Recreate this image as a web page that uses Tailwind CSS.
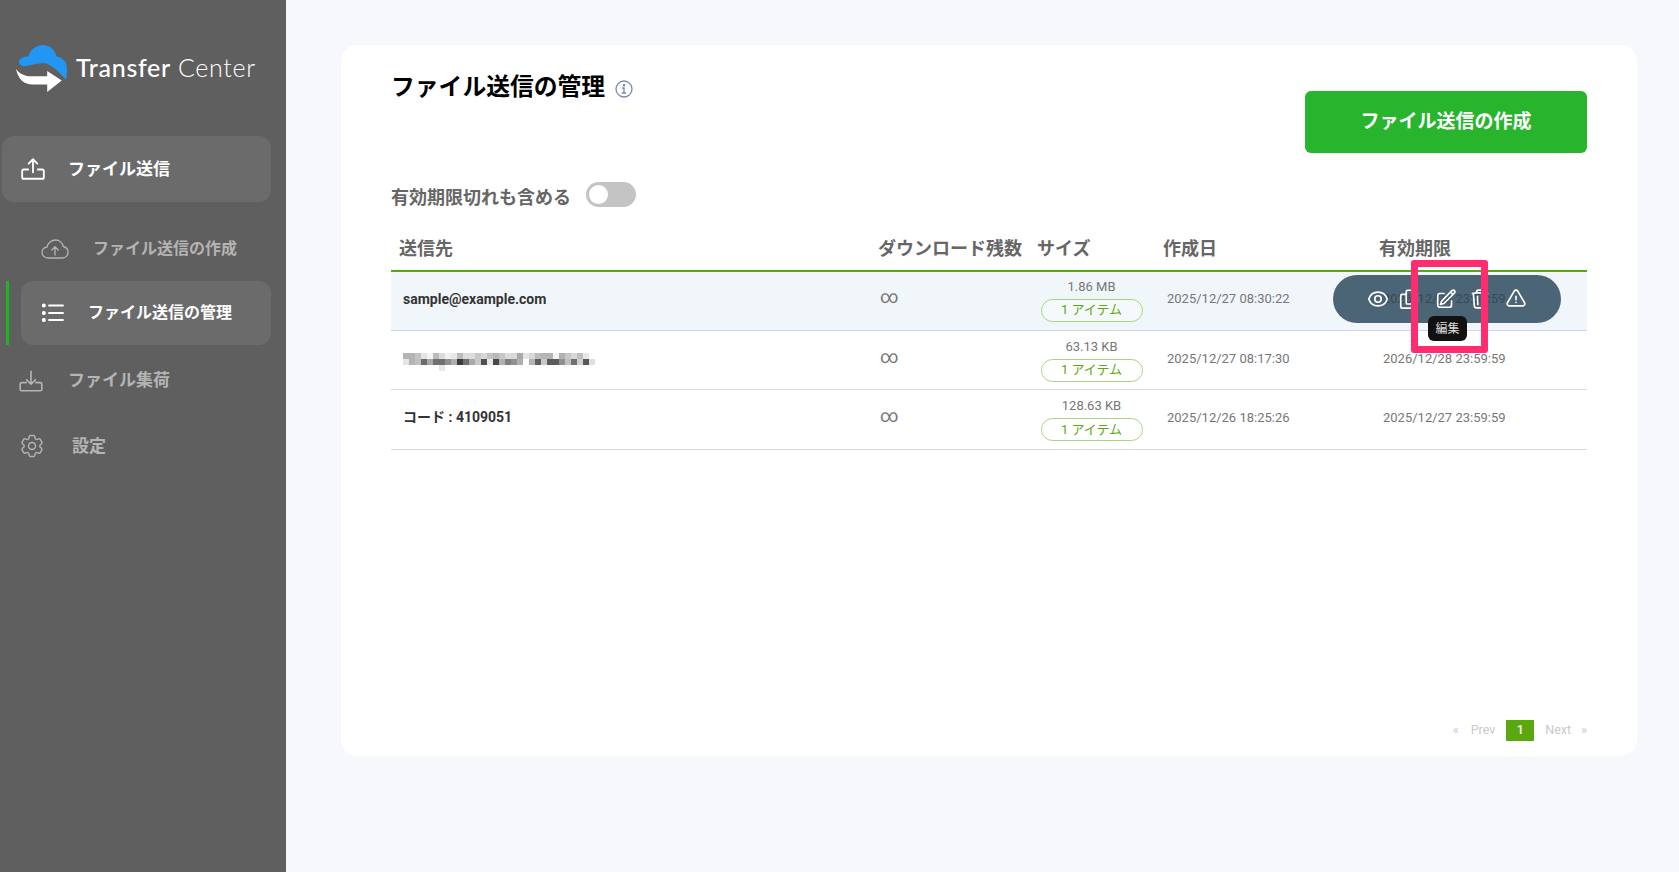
<!DOCTYPE html>
<html lang="ja">
<head>
    <meta charset="UTF-8">
    <title>Transfer Center</title>
    <script src="https://cdn.jsdelivr.net/npm/@tailwindcss/browser@4"></script>
</head>
<body class="relative h-[872px] w-[1679px] overflow-hidden bg-[#f7f8fc] font-['Roboto','Noto_Sans_CJK_JP',sans-serif]">
    <div class="flex h-full">
        <!-- Sidebar -->
        <aside class="w-[286px] shrink-0 bg-[#5f5f5f]">
            <div class="flex h-[136px] items-start pl-4 pt-[45px]">
                <svg class="h-[48px] w-[52px] shrink-0" viewBox="0 0 50 46">
                    <path fill="#2196f3" d="M6 20C2 19 2 14 5 13C8 11 10 11 12 11C14 4 20 0 26 0C32 0 37 4 39 11C45 12 49 16 49 22C49 26 49 30 48 33L38 23L30 18C20 16 10 22 6 20Z"/>
                    <path fill="#fff" d="M0 23C2 33 8 38 16 38L30 38L30 45L44 34L30 25L30 30L14 30C8 30 3 27 0 23Z"/>
                </svg>
                <div class="ml-[8px] mt-[5px] font-['Lato',sans-serif] text-[25px] leading-[34px] tracking-[0.700px] text-white whitespace-nowrap"><span class="font-medium">Transfer</span> <span class="font-light">Center</span></div>
            </div>
            <nav>
                <a class="ml-[2px] flex h-[66px] w-[269px] items-center rounded-xl bg-[#6b6b6b] pl-[18px] text-[17px] font-bold text-white">
                    <svg class="h-[26px] w-[26px]" fill="none" stroke="currentColor" stroke-width="1.700" stroke-linecap="round" stroke-linejoin="round" viewBox="0 0 24 24"><path d="M12 15V3M8 7l4-4 4 4M7.500 12.500H3.500A1.500 1.500 0 002 14v5.500A1.500 1.500 0 003.500 21h17a1.500 1.500 0 001.500-1.500V14a1.500 1.500 0 00-1.500-1.500h-4"/></svg>
                    <span class="ml-[22px] pt-[2px]">ファイル送信</span>
                </a>
                <a class="mt-[15px] flex h-[64px] items-center pl-[41px] text-[16px] font-bold text-[#b4b4b4]">
                    <svg class="h-[28px] w-[28px]" fill="none" stroke="currentColor" stroke-width="1.300" stroke-linecap="round" stroke-linejoin="round" viewBox="0 0 28 28"><path d="M7 23C3.500 23 1 20.500 1 17.500C1 14.500 3.300 12.300 6 12C7 8 10.500 5 14.500 5C18.500 5 21.500 8 22.300 11.500C25 12 27 14.500 27 17.500C27 20.500 24.500 23 21.500 23Z"/><path d="M14 20V12M10.800 15L14 11.800L17.200 15"/></svg>
                    <span class="ml-[24px]">ファイル送信の作成</span>
                </a>
                <div class="flex h-[64px] items-stretch">
                    <div class="ml-[6px] w-[3px] bg-[#1fb51f]"></div>
                    <a class="ml-[12px] flex w-[250px] items-center rounded-xl bg-[#6b6b6b] pl-[21px] text-[16px] font-bold text-white">
                        <svg class="h-[22px] w-[22px]" fill="none" stroke="currentColor" stroke-width="1.800" stroke-linecap="round" viewBox="0 0 22 22"><path d="M7 3.500H21M7 11H21M7 18H21"/><path stroke-width="4" d="M1.800 3.500h.1M1.800 11h.1M1.800 18h.1"/></svg>
                        <span class="ml-[24px]">ファイル送信の管理</span>
                    </a>
                </div>
                <a class="mt-[4px] flex h-[64px] items-center pl-[18px] text-[17px] font-bold text-[#b4b4b4]">
                    <svg class="h-[26px] w-[26px]" fill="none" stroke="currentColor" stroke-width="1.500" stroke-linecap="round" stroke-linejoin="round" viewBox="0 0 24 24"><path d="M12 3V15M8 11l4 4 4-4M7.500 13.500H3.500A1.500 1.500 0 002 15v4.500A1.500 1.500 0 003.500 21h17a1.500 1.500 0 001.500-1.500V15a1.500 1.500 0 00-1.500-1.500h-4"/></svg>
                    <span class="ml-[24px]">ファイル集荷</span>
                </a>
                <a class="flex h-[66px] items-center pl-[18px] text-[17px] font-bold text-[#b4b4b4]">
                    <svg class="h-[28px] w-[28px]" fill="none" stroke="currentColor" stroke-width="1.200" viewBox="0 0 24 24"><path stroke-linecap="round" stroke-linejoin="round" d="M9.594 3.940c.09-.542.56-.94 1.110-.94h2.593c.55 0 1.020.398 1.110.94l.213 1.281c.063.374.313.686.645.87.074.04.147.083.22.127.324.196.72.257 1.075.124l1.217-.456a1.125 1.125 0 011.370.49l1.296 2.247a1.125 1.125 0 01-.26 1.431l-1.003.827c-.293.24-.438.613-.431.992a6.759 6.759 0 010 .255c-.007.378.138.75.43.99l1.005.828c.424.35.534.954.26 1.430l-1.298 2.247a1.125 1.125 0 01-1.369.491l-1.217-.456c-.355-.133-.75-.072-1.076.124a6.570 6.570 0 01-.22.128c-.331.183-.581.495-.644.869l-.213 1.280c-.09.543-.56.941-1.110.941h-2.594c-.55 0-1.020-.398-1.110-.94l-.213-1.281c-.062-.374-.312-.686-.644-.87a6.520 6.520 0 01-.22-.127c-.325-.196-.72-.257-1.076-.124l-1.217.456a1.125 1.125 0 01-1.369-.49l-1.297-2.247a1.125 1.125 0 01.26-1.431l1.004-.827c.292-.24.437-.613.43-.992a6.932 6.932 0 010-.255c.007-.378-.138-.75-.43-.99l-1.004-.828a1.125 1.125 0 01-.26-1.430l1.297-2.247a1.125 1.125 0 011.370-.491l1.216.456c.356.133.751.072 1.076-.124.072-.044.146-.087.22-.128.332-.183.582-.495.644-.869l.214-1.281z"/><circle cx="12" cy="12" r="3"/></svg>
                    <span class="ml-[26px] pt-[2px]">設定</span>
                </a>
            </nav>
        </aside>

        <!-- Main -->
        <main class="flex-1 pl-[55px] pr-[42px] pt-[45px]">
            <div class="flex h-[711px] flex-col rounded-2xl bg-white px-[50px] pt-[25px] pb-[15px]">
                <div class="flex items-start justify-between">
                    <div class="flex items-center pt-[1px]">
                        <h1 class="text-[23.800px] leading-[32px] font-bold text-black">ファイル送信の管理</h1>
                        <svg class="ml-[10px] mt-[3px] h-[18px] w-[18px] text-[#7a86b0]" fill="none" stroke="currentColor" stroke-width="1.300" viewBox="0 0 18 18"><circle cx="9" cy="9" r="8"/><path stroke-linecap="round" d="M7.500 8H9V13M7.300 13H10.700"/><circle cx="9" cy="5.300" r="0.600" fill="currentColor"/></svg>
                    </div>
                    <button class="mt-[21px] h-[62px] w-[282px] rounded-md bg-[#28b42d] text-[19px] font-bold text-white">ファイル送信の作成</button>
                </div>

                <div class="mt-[28px] flex h-[26px] items-center">
                    <span class="pt-[6px] text-[18px] font-bold text-[#666]">有効期限切れも含める</span>
                    <div class="ml-[15px] flex h-[25px] w-[50px] items-center rounded-full bg-[#c4c4c4] pl-[3px]">
                        <div class="h-[19px] w-[19px] rounded-full bg-white"></div>
                    </div>
                </div>

                <!-- Table -->
                <div class="mt-[21px]">
                    <div class="grid h-[44px] grid-cols-[479px_160px_125px_212px_220px] items-center border-b-2 border-[#5aa80f] pb-[1px] text-[18px] font-bold text-[#666]">
                        <div class="pl-2">送信先</div>
                        <div class="pl-2 whitespace-nowrap">ダウンロード残数</div>
                        <div class="pl-[7px]">サイズ</div>
                        <div class="pl-2">作成日</div>
                        <div class="pl-3">有効期限</div>
                    </div>

                    <div class="relative grid h-[59px] grid-cols-[479px_160px_125px_212px_220px] items-center border-b border-[#ccd6e6] bg-[#f1f6fa] text-[13px] text-[#777]">
                        <div class="absolute left-[942px] top-[3px] h-[48px] w-[228px] rounded-full bg-[#4c6576]"></div>
                        <div class="pb-[3px] pl-3 text-[14px] font-bold text-[#333]">sample@example.com</div>
                        <div class="pb-[9px] pl-[10px] text-[18px] leading-none">∞</div>
                        <div class="flex flex-col items-center pb-[3px] pr-[2px]"><span class="leading-[18px]">1.86 MB</span><span class="mt-[3px] flex h-[23px] w-[102px] items-center justify-center rounded-full border border-[#a5d585] bg-white/40 text-[#5aa80f]">1 アイテム</span></div>
                        <div class="pb-[4px] pl-3">2025/12/27 08:30:22</div>
                        <div class="relative z-10 pb-[4px] pl-4 text-[#364a58]">2026/12/28 23:59:59</div>
                        <div class="absolute left-[942px] top-[3px] z-20 flex h-[48px] w-[228px] items-center pl-[34px] text-white">
                            <svg class="h-[22px] w-[22px] shrink-0" fill="none" stroke="currentColor" stroke-width="1.800" stroke-linecap="round" stroke-linejoin="round" viewBox="0 0 24 24"><path d="M2.036 12.322a1.012 1.012 0 010-.639C3.423 7.510 7.360 4.500 12 4.500c4.638 0 8.573 3.007 9.963 7.178.07.207.07.431 0 .639C20.577 16.490 16.640 19.500 12 19.500c-4.638 0-8.573-3.007-9.963-7.178z"/><circle cx="12" cy="12" r="3.500"/></svg>
                            <svg class="ml-[9px] h-[22px] w-[22px] shrink-0" fill="none" stroke="currentColor" stroke-width="1.800" stroke-linecap="round" stroke-linejoin="round" viewBox="0 0 24 24"><rect x="9" y="2.500" width="12" height="15" rx="1.500"/><path d="M9 7H4.500A1.500 1.500 0 003 8.500v12A1.500 1.500 0 004.500 22h9a1.500 1.500 0 001.500-1.500V17.500"/></svg>
                            <svg class="ml-[15px] h-[22px] w-[22px] shrink-0" fill="none" stroke="currentColor" stroke-width="1.800" stroke-linecap="round" stroke-linejoin="round" viewBox="0 0 24 24"><path d="M16.862 4.487l1.687-1.688a1.875 1.875 0 112.652 2.652L10.582 16.070a4.500 4.500 0 01-1.897 1.130L6 18l.8-2.685a4.500 4.500 0 011.130-1.897l8.932-8.931zm0 0L19.500 7.125M18 14v4.750A2.250 2.250 0 0115.750 21H5.250A2.250 2.250 0 013 18.750V8.250A2.250 2.250 0 015.250 6H10"/></svg>
                            <svg class="ml-[12px] h-[22px] w-[22px] shrink-0" fill="none" stroke="currentColor" stroke-width="1.800" stroke-linecap="round" stroke-linejoin="round" viewBox="0 0 24 24"><path d="M14.740 9l-.346 9m-4.788 0L9.260 9m9.968-3.210c.342.052.682.107 1.022.166m-1.022-.165L18.160 19.673a2.250 2.250 0 01-2.244 2.077H8.084a2.250 2.250 0 01-2.244-2.077L4.772 5.790m14.456 0a48.108 48.108 0 00-3.478-.397m-12 .562c.34-.059.68-.114 1.022-.165m0 0a48.110 48.110 0 013.478-.397m7.500 0v-.916c0-1.180-.91-2.164-2.090-2.201a51.964 51.964 0 00-3.320 0c-1.180.037-2.090 1.022-2.090 2.201v.916m7.500 0a48.667 48.667 0 00-7.500 0"/></svg>
                            <svg class="ml-[14px] h-[22px] w-[22px] shrink-0" fill="none" stroke="currentColor" stroke-width="1.800" stroke-linecap="round" stroke-linejoin="round" viewBox="0 0 24 24"><path d="M12 9v3.750m-9.303 3.376c-.866 1.500.217 3.374 1.948 3.374h14.710c1.730 0 2.813-1.874 1.948-3.374L13.949 3.378c-.866-1.500-3.032-1.500-3.898 0L2.697 16.126zM12 15.750h.007v.008H12v-.008z"/></svg>
                        </div>
                    </div>

                    <div class="grid h-[59px] grid-cols-[479px_160px_125px_212px_220px] items-center border-b border-[#d5dce6] text-[13px] text-[#777]">
                        <div id="blurredAddress" class="ml-3 flex w-[192px] flex-wrap pt-[3px]"></div>
                        <div class="pb-[7px] pl-[10px] text-[18px] leading-none">∞</div>
                        <div class="flex flex-col items-center pb-[1px] pr-[2px]"><span class="leading-[18px]">63.13 KB</span><span class="mt-[3px] flex h-[23px] w-[102px] items-center justify-center rounded-full border border-[#a5d585] text-[#5aa80f]">1 アイテム</span></div>
                        <div class="pb-[2px] pl-3">2025/12/27 08:17:30</div>
                        <div class="pb-[2px] pl-4">2026/12/28 23:59:59</div>
                    </div>

                    <div class="grid h-[60px] grid-cols-[479px_160px_125px_212px_220px] items-center border-b border-[#d5dce6] text-[13px] text-[#777]">
                        <div class="pb-[5px] pl-3 text-[14px] font-bold text-[#333]">コード : 4109051</div>
                        <div class="pb-[7px] pl-[10px] text-[18px] leading-none">∞</div>
                        <div class="flex flex-col items-center pb-[1px] pr-[2px]"><span class="leading-[18px]">128.63 KB</span><span class="mt-[3px] flex h-[23px] w-[102px] items-center justify-center rounded-full border border-[#a5d585] text-[#5aa80f]">1 アイテム</span></div>
                        <div class="pb-[4px] pl-3">2025/12/26 18:25:26</div>
                        <div class="pb-[4px] pl-4">2025/12/27 23:59:59</div>
                    </div>
                </div>

                <!-- Pagination -->
                <div class="mt-auto flex items-center justify-end text-[12.500px] text-[#c9c9c9]">
                    <span>«</span>
                    <span class="ml-[12px]">Prev</span>
                    <span class="ml-[11px] flex h-[21px] w-[28px] items-center justify-center bg-[#5aa80f] font-medium text-white">1</span>
                    <span class="ml-[11px]">Next</span>
                    <span class="ml-[10px]">»</span>
                </div>
            </div>
        </main>
    </div>

    <!-- Tooltip and annotation over the table -->
    <div class="absolute left-[1428px] top-[316px] z-30 flex h-[25px] w-[39px] items-center justify-center rounded-md bg-[#111] pt-[1px] text-[12px] text-[#ddd]">編集</div>
    <div class="absolute left-[1411px] top-[260px] z-30 h-[93px] w-[77px] rounded-[3px] border-[7px] border-[#ff2d6f]"></div>

    <script>
        // Mosaic over the masked address: grey levels, rows of 6px cells
        const rows = [
            'b4 b4 c4 e4 f4 bc dc f0 e8 bc dc dc c8 d8 c4 b8 c8 dc d8 a8 e4 d8 bc b4 b4 f4 b0 c8 d8 c0 e8 ff',
            'e4 b4 c0 6c a8 70 70 90 b0 3c 70 a8 c8 50 e8 48 b0 80 90 b0 ff b4 60 c8 5c 5c 90 c0 70 d0 58 e0',
            'ff ff ff ff ff ff e8 ff ff ff ff ff ff ff ff ff ff ff ff ff ff ff ff ff ff ff ff ff ff ff ff ff'
        ];
        const box = document.getElementById('blurredAddress');
        rows.join(' ').split(' ').forEach(v => {
            const cell = document.createElement('div');
            cell.className = 'h-[6px] w-[6px]';
            cell.style.backgroundColor = `#${v}${v}${v}`;
            box.appendChild(cell);
        });
    </script>
</body>
</html>
